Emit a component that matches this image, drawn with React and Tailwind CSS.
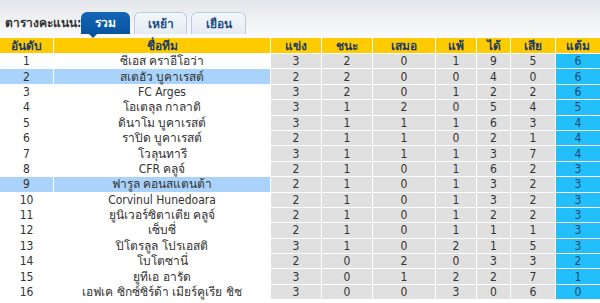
import React from "react";

const rows = [
  [1, "ซีเอส คราอีโอว่า", 3, 2, 0, 1, 9, 5, 6, false],
  [2, "สเตอัว บูคาเรสต์", 2, 2, 0, 0, 4, 0, 6, true],
  [3, "FC Arges", 3, 2, 0, 1, 2, 2, 6, false],
  [4, "โอเตลุล กาลาติ", 3, 1, 2, 0, 5, 4, 5, false],
  [5, "ดินาโม บูคาเรสต์", 3, 1, 1, 1, 6, 3, 4, false],
  [6, "ราปิด บูคาเรสต์", 2, 1, 1, 0, 2, 1, 4, false],
  [7, "โวลุนทารี", 3, 1, 1, 1, 3, 7, 4, false],
  [8, "CFR คลูจ์", 2, 1, 0, 1, 6, 2, 3, false],
  [9, "ฟารูล คอนสแตนต้า", 2, 1, 0, 1, 3, 2, 3, true],
  [10, "Corvinul Hunedoara", 2, 1, 0, 1, 3, 2, 3, false],
  [11, "ยูนิเวอร์ซิตาเตีย คลูจ์", 2, 1, 0, 1, 2, 2, 3, false],
  [12, "เซ็บซี่", 2, 1, 0, 1, 1, 1, 3, false],
  [13, "ปิโตรลูล โปรเอสติ", 3, 1, 0, 2, 1, 5, 3, false],
  [14, "โบโตซานี่", 2, 0, 2, 0, 3, 3, 2, false],
  [15, "ยูทีเอ อารัด", 3, 0, 1, 2, 2, 7, 1, false],
  [16, "เอฟเค ซิกซ์ซิร์ด้า เมียร์คูเรีย ชิช", 3, 0, 0, 3, 0, 6, 0, false],
];

const heads = ["อันดับ", "ชื่อทีม", "แข่ง", "ชนะ", "เสมอ", "แพ้", "ได้", "เสีย", "แต้ม"];
const cols = "grid grid-cols-[53px_216px_50px_50px_62px_40px_33px_44px_44px] gap-x-px";

export default function App() {
  return (
    <div
      className="w-[600px] h-[303px] bg-white overflow-hidden text-[#333] text-[12px]"
      style={{ fontFamily: "'DejaVu Sans Condensed', 'DejaVu Sans', 'Noto Sans', sans-serif" }}
    >
      <div className="h-[38px] bg-gradient-to-b from-[#e3e6ea] to-[#fbfbfc] flex items-end">
        <div className="w-[81px] overflow-hidden whitespace-nowrap pl-[5px] pb-[6px] text-[12px] text-[#333] font-semibold">
          ตารางคะแนน:
        </div>
        <div className="flex gap-[4px] h-[26px] items-stretch">
          <div className="relative w-[49px] rounded-t-[6px] bg-gradient-to-b from-[#1466b8] to-[#0853a0] text-white font-bold flex items-center justify-center text-[12px] mb-[4px]">
            รวม
            <div className="absolute left-[8px] -bottom-[4px] w-0 h-0 border-l-[4px] border-r-[4px] border-t-[4px] border-l-transparent border-r-transparent border-t-[#0853a0]" />
          </div>
          <div className="w-[53px] rounded-t-[6px] border border-b-0 border-[#bccbe0] bg-gradient-to-b from-[#f3f6fa] to-[#e6ecf4] text-[#1b4c86] font-bold flex items-center justify-center text-[12px] mb-[4px]">
            เหย้า
          </div>
          <div className="w-[55px] rounded-t-[6px] border border-b-0 border-[#bccbe0] bg-gradient-to-b from-[#f3f6fa] to-[#e6ecf4] text-[#1b4c86] font-bold flex items-center justify-center text-[12px] mb-[4px]">
            เยือน
          </div>
        </div>
      </div>
      <div className={cols + " h-[15px] bg-white"}>
        {heads.map((h) => (
          <div key={h} className="bg-[#fecb00] text-[#1d3a66] font-bold flex items-center justify-center text-[12px] leading-none">
            {h}
          </div>
        ))}
      </div>
      {rows.map((r) => {
        const hl = r[9];
        const left = hl ? "bg-[#a9d3fb]" : "bg-white";
        return (
          <div key={r[0]} className={cols + " h-[15.4px] bg-white pt-px"}>
            <div className={left + " flex items-center justify-center leading-none"}>{r[0]}</div>
            <div className={left + " flex items-center justify-center leading-none whitespace-nowrap"}>{r[1]}</div>
            {r.slice(2, 8).map((v, i) => (
              <div key={i} className="bg-[#e0e0e0] flex items-center justify-center leading-none">{v}</div>
            ))}
            <div className="bg-[#22bffb] text-[#174a6e] flex items-center justify-center leading-none">{r[8]}</div>
          </div>
        );
      })}
    </div>
  );
}
